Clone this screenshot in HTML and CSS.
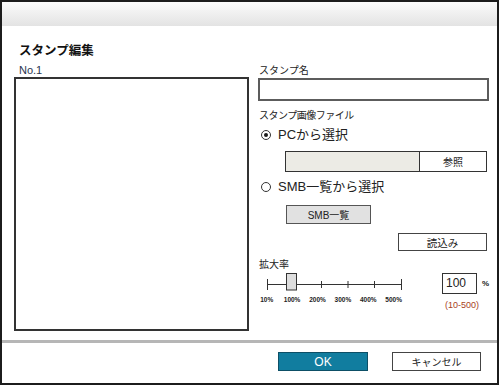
FILE: index.html
```html
<!DOCTYPE html>
<html lang="ja">
<head>
<meta charset="utf-8">
<link rel="stylesheet" href="styles.css">
</head>
<body>
<div class="dialog">
  <div class="titlebar"></div>
  <div class="main">
    <h1 class="title">スタンプ編集</h1>
    <div class="columns">
      <div class="left">
        <div class="label no">No.1</div>
        <div class="preview"></div>
      </div>
      <div class="right">
        <div class="label">スタンプ名</div>
        <div class="textbox"></div>
        <div class="label file-label">スタンプ画像ファイル</div>
        <div class="radio-row pc"><span class="radio checked"></span><span class="radio-text">PCから選択</span></div>
        <div class="file-row"><div class="file-field"></div><div class="btn browse">参照</div></div>
        <div class="radio-row smb"><span class="radio"></span><span class="radio-text">SMB一覧から選択</span></div>
        <div class="btn smb-btn">SMB一覧</div>
        <div class="load-row"><div class="btn load-btn">読込み</div></div>
        <div class="label zoom-label">拡大率</div>
        <div class="zoom-row">
          <div class="slider">
            <svg class="track" width="145" height="22" viewBox="0 0 145 22">
              <line x1="5" y1="11.5" x2="139.5" y2="11.5" stroke="#333" stroke-width="1"/>
              <line x1="5.5" y1="6" x2="5.5" y2="17" stroke="#333" stroke-width="1"/>
              <line x1="32.5" y1="8" x2="32.5" y2="15" stroke="#333" stroke-width="1"/>
              <line x1="59.5" y1="8" x2="59.5" y2="15" stroke="#333" stroke-width="1"/>
              <line x1="86" y1="8" x2="86" y2="15" stroke="#333" stroke-width="1"/>
              <line x1="112.5" y1="8" x2="112.5" y2="15" stroke="#333" stroke-width="1"/>
              <line x1="139.5" y1="6" x2="139.5" y2="17" stroke="#333" stroke-width="1"/>
              <rect x="24.5" y="0.5" width="10" height="16.5" fill="#dedede" stroke="#333" stroke-width="1"/>
            </svg>
            <div class="ticks"><span>10%</span><span>100%</span><span>200%</span><span>300%</span><span>400%</span><span>500%</span></div>
          </div>
          <div class="pct">
            <div class="pct-row"><div class="pct-box">100</div><span class="pct-sign">%</span></div>
            <div class="range">(10-500)</div>
          </div>
        </div>
      </div>
    </div>
  </div>
  <div class="footer">
    <div class="btn ok">OK</div>
    <div class="btn cancel">キャンセル</div>
  </div>
</div>
</body>
</html>
```

FILE: styles.css
```css
* { box-sizing: border-box; }
html, body { margin: 0; padding: 0; background: #fff; }
body {
  font-family: "Liberation Sans", "Noto Sans CJK JP", sans-serif;
  color: #222;
}
.dialog {
  width: 499px;
  height: 385px;
  border: 2px solid #1c1c1c;
  display: flex;
  flex-direction: column;
  background: #fff;
}
.titlebar {
  height: 24px;
  background: linear-gradient(#fbfbfb, #e3e3e3);
}
.main {
  padding: 17px 0 0 12px;
  border-bottom: 3px solid #b6b6b6;
  padding-bottom: 9px;
}
.title {
  margin: 0 0 5px 5px;
  font-size: 12.5px;
  line-height: 16px;
  font-weight: bold;
  color: #111;
}
.columns {
  display: flex;
  gap: 9px;
}
.left { width: 235px; }
.right { width: 231px; }
.label {
  font-size: 10px;
  line-height: 13px;
  height: 13px;
  padding-left: 1px;
  white-space: nowrap;
}
.label.no {
  font-size: 11px;
  padding-left: 5px;
  color: #2a3550;
}
.preview {
  height: 254px;
  border: 2px solid #333;
  background: #fff;
}
.textbox {
  margin-top: 1px;
  height: 23px;
  border: 2px solid #5c5c5c;
  background: #fff;
}
.file-label { margin-top: 8px; letter-spacing: -0.5px; }
.radio-row {
  display: flex;
  align-items: center;
  height: 16px;
  padding-left: 3px;
  font-size: 13px;
  white-space: nowrap;
}
.radio-row.pc { margin-top: 5px; }
.radio-row.smb { margin-top: 7px; }
.radio {
  width: 10px;
  height: 10px;
  border: 1px solid #333;
  border-radius: 50%;
  background: #fff;
  display: flex;
  align-items: center;
  justify-content: center;
}
.radio.checked::after {
  content: "";
  width: 4px;
  height: 4px;
  border-radius: 50%;
  background: #1a1a1a;
}
.radio-text { margin-left: 7px; line-height: 16px; }
.file-row {
  display: flex;
  margin: 8px 0 0 27px;
  height: 21px;
}
.file-field {
  width: 135px;
  border: 1px solid #333;
  background: #ecebe5;
}
.btn {
  display: flex;
  align-items: center;
  justify-content: center;
  border: 1px solid #444;
  background: #fff;
  font-size: 10px;
  color: #222;
  white-space: nowrap;
}
.browse {
  width: 68px;
  margin-left: -1px;
  border-color: #333;
}
.smb-btn {
  margin: 10px 0 0 28px;
  width: 85px;
  height: 19px;
  background: #e1e1e1;
  border-color: #555;
}
.load-row {
  display: flex;
  justify-content: flex-end;
  margin-top: 9px;
  padding-right: 2px;
}
.load-btn {
  width: 89px;
  height: 18px;
  font-size: 10.5px;
}
.zoom-label { margin-top: 7px; }
.zoom-row {
  display: flex;
  margin-top: 2px;
}
.slider { width: 149px; }
.track { display: block; margin-left: 4px; }
.ticks {
  display: flex;
  margin: 1px 0 0 -4px;
}
.ticks span {
  width: 25.4px;
  flex: none;
  text-align: center;
  font-size: 6.5px;
  line-height: 8px;
  font-weight: bold;
  color: #222;
  white-space: nowrap;
}
.pct { margin-left: 35px; }
.pct-row { display: flex; align-items: center; }
.pct-box {
  width: 35px;
  height: 21px;
  border: 1px solid #333;
  font-size: 12px;
  line-height: 19px;
  padding-left: 3px;
}
.pct-sign {
  margin-left: 5px;
  font-size: 8px;
  font-weight: bold;
}
.range {
  margin: 7px 0 0 3px;
  font-size: 9px;
  line-height: 9px;
  color: #a8421c;
}
.footer {
  flex: 1;
  display: flex;
  justify-content: flex-end;
  align-items: flex-start;
  gap: 24px;
  padding: 9px 16px 0 0;
}
.ok {
  width: 90px;
  height: 19px;
  background: #117d9f;
  border-color: #0d4f66;
  color: #fff;
  font-size: 12px;
}
.cancel {
  width: 89px;
  height: 19px;
  font-size: 10px;
}
```
